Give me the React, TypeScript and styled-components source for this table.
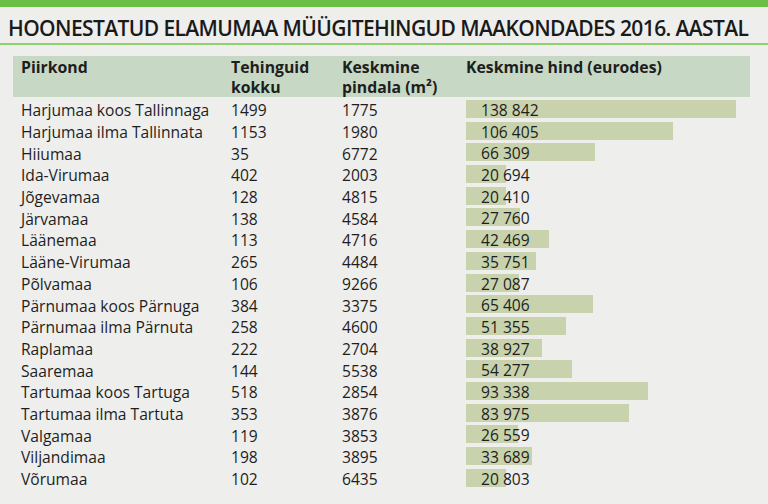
import React from "react";
import styled, { createGlobalStyle } from "styled-components";

const GlobalStyle = createGlobalStyle`
  html, body { margin: 0; padding: 0; background: #eeeeec; }
  body { font-family: "Open Sans", "Noto Sans", sans-serif; color: #1e1e1e; }
`;

const Page = styled.div`
  width: 768px;
  height: 504px;
  overflow: hidden;
  background: #eeeeec;
  display: flex;
  flex-direction: column;
`;

const TopBar = styled.div`
  height: 7px;
  background: #6bbf47;
`;

const Title = styled.h1`
  margin: 0;
  padding: 6px 0 0 8px;
  height: 30px;
  font-family: "Open Sans", sans-serif;
  font-weight: 600;
  font-size: 21px;
  line-height: 30px;
  letter-spacing: -0.6px;
  color: #1a1a1a;
  white-space: nowrap;
`;

const Rule = styled.div`
  height: 2px;
  background: #8fd16c;
`;

const Table = styled.div`
  margin: 11px 0 0 13px;
  width: 737px;
`;

const cols = "210px 111px 124px 1fr";

const Header = styled.div`
  display: grid;
  grid-template-columns: ${cols};
  height: 41px;
  padding: 1px 0 0 8px;
  box-sizing: border-box;
  background: #c7d9c4;
  font-weight: 700;
  font-size: 15.8px;
  line-height: 20px;
  color: #1e1e1e;
`;

const HeadCell = styled.div`
  white-space: nowrap;
`;

const Rows = styled.div`
  margin-top: 1px;
  display: grid;
  grid-auto-rows: 21.7px;
`;

const Row = styled.div`
  display: grid;
  grid-template-columns: ${cols};
  padding-left: 8px;
  align-items: center;
  font-size: 15.6px;
  line-height: 18px;
`;

const Cell = styled.div`
  white-space: nowrap;
  padding-top: 3px;
`;

const BarCell = styled.div`
  position: relative;
  height: 18px;
  align-self: start;
  margin-top: 2px;
`;

const Bar = styled.div`
  position: absolute;
  left: 0;
  top: 0;
  height: 18px;
  background: #c8d3ad;
`;

const BarLabel = styled.span`
  position: relative;
  display: block;
  padding-left: 15px;
  line-height: 20px;
`;

const data: [string, number, number, number][] = [
  ["Harjumaa koos Tallinnaga", 1499, 1775, 138842],
  ["Harjumaa ilma Tallinnata", 1153, 1980, 106405],
  ["Hiiumaa", 35, 6772, 66309],
  ["Ida-Virumaa", 402, 2003, 20694],
  ["Jõgevamaa", 128, 4815, 20410],
  ["Järvamaa", 138, 4584, 27760],
  ["Läänemaa", 113, 4716, 42469],
  ["Lääne-Virumaa", 265, 4484, 35751],
  ["Põlvamaa", 106, 9266, 27087],
  ["Pärnumaa koos Pärnuga", 384, 3375, 65406],
  ["Pärnumaa ilma Pärnuta", 258, 4600, 51355],
  ["Raplamaa", 222, 2704, 38927],
  ["Saaremaa", 144, 5538, 54277],
  ["Tartumaa koos Tartuga", 518, 2854, 93338],
  ["Tartumaa ilma Tartuta", 353, 3876, 83975],
  ["Valgamaa", 119, 3853, 26559],
  ["Viljandimaa", 198, 3895, 33689],
  ["Võrumaa", 102, 6435, 20803],
];

const fmt = (n: number) => String(n).replace(/\B(?=(\d{3})+(?!\d))/g, " ");

export default function App() {
  return (
    <Page>
      <GlobalStyle />
      <TopBar />
      <Title>HOONESTATUD ELAMUMAA MÜÜGITEHINGUD MAAKONDADES 2016. AASTAL</Title>
      <Rule />
      <Table>
        <Header>
          <HeadCell>Piirkond</HeadCell>
          <HeadCell>
            Tehinguid
            <br />
            kokku
          </HeadCell>
          <HeadCell>
            Keskmine
            <br />
            pindala (m²)
          </HeadCell>
          <HeadCell>Keskmine hind (eurodes)</HeadCell>
        </Header>
        <Rows>
          {data.map(([name, deals, area, price]) => (
            <Row key={name}>
              <Cell>{name}</Cell>
              <Cell>{deals}</Cell>
              <Cell>{area}</Cell>
              <BarCell>
                <Bar style={{ width: `${(price / 138842) * 270}px` }} />
                <BarLabel>{fmt(price)}</BarLabel>
              </BarCell>
            </Row>
          ))}
        </Rows>
      </Table>
    </Page>
  );
}
